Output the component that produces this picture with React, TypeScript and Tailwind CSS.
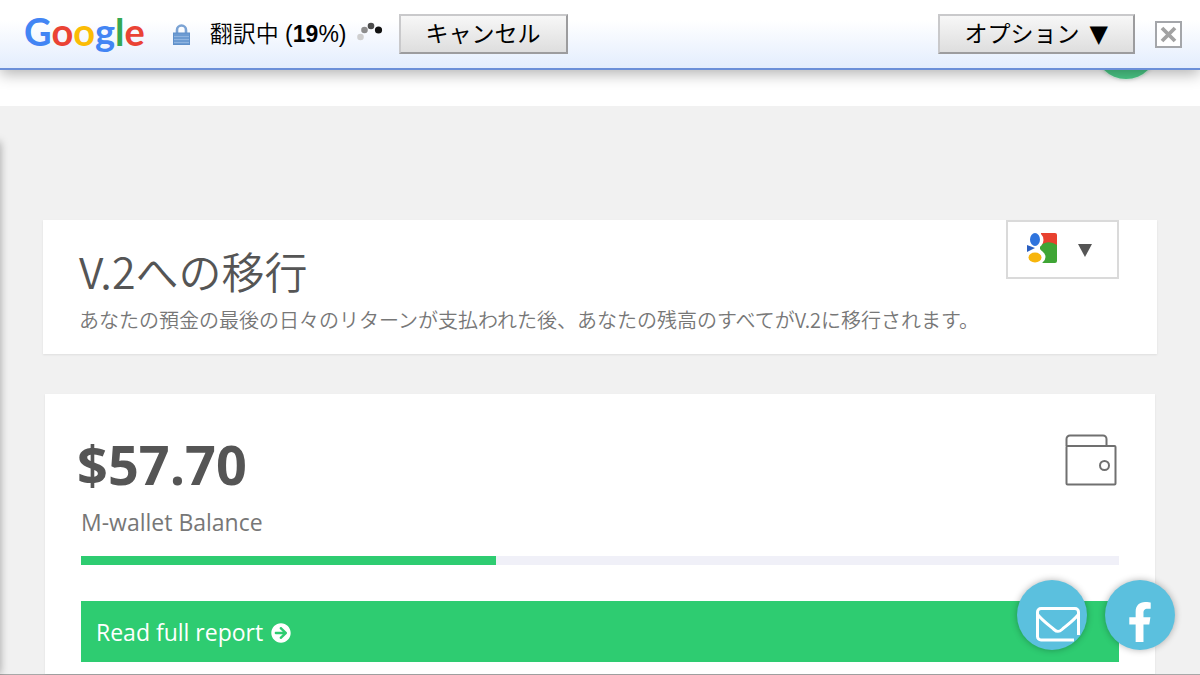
import type { ReactNode } from "react";
import { FaArrowCircleRight, FaFacebookF } from "react-icons/fa";

const uiFont =
  "font-['Liberation_Sans','Noto_Sans_CJK_JP',sans-serif]";
const pageFont = "font-['Open_Sans','Noto_Sans_CJK_JP',sans-serif]";
const japaneseFont = "font-['Noto_Sans_CJK_JP',sans-serif]";

function GoogleLogo() {
  return (
    <span
      aria-label="Google"
      className="pb-1.5 font-['Lato',sans-serif] text-[38px] leading-[48px] font-bold"
    >
      <span className="text-[#4285f4]">G</span>
      <span className="text-[#ea4335]">o</span>
      <span className="text-[#fbbc05]">o</span>
      <span className="text-[#4285f4]">g</span>
      <span className="text-[#34a853]">l</span>
      <span className="text-[#ea4335]">e</span>
    </span>
  );
}

function LockIcon() {
  return (
    <svg width="17" height="21" viewBox="0 0 17 21" aria-hidden="true">
      <path d="M4 10V6a4.5 4.5 0 0 1 9 0v4" fill="none" stroke="#7ba3d4" strokeWidth="2.6" />
      <rect x="0.5" y="9" width="16" height="11.5" fill="#6c9bd2" stroke="#5f90ca" />
      <path d="M1 12.5h15M1 15.500h15M1 18.500h15" stroke="#8fb4e0" strokeWidth="1" />
    </svg>
  );
}

function Spinner() {
  return (
    <svg width="26" height="20" viewBox="0 0 26 20" aria-hidden="true">
      <circle cx="3.500" cy="15" r="3.300" fill="#cfcfcf" />
      <circle cx="7.500" cy="8" r="3.300" fill="#8d8d8d" />
      <circle cx="14" cy="4" r="3.300" fill="#4c4c4c" />
      <circle cx="21.500" cy="8" r="3.600" fill="#111" />
    </svg>
  );
}

function ToolButton({ children }: { children: ReactNode }) {
  return (
    <button
      type="button"
      className="flex h-10 items-center border-2 border-t-[#c9c9cb] border-r-[#9c9c9e] border-b-[#9c9c9e] border-l-[#c9c9cb] bg-linear-to-b from-[#f7f7f7] to-[#dedede] px-[25px] text-[23px] leading-8 whitespace-nowrap text-black"
    >
      {children}
    </button>
  );
}

function TranslateBar() {
  return (
    <header
      className={`${uiFont} relative z-20 flex h-[70px] items-center border-b-2 border-[#6b8fd8] bg-linear-to-b from-white from-30% to-[#e3edfd] pr-[18px] pl-6 text-black shadow-[0_4px_14px_rgba(0,0,0,0.3)]`}
    >
      <GoogleLogo />
      <div className="ml-7 flex items-center">
        <LockIcon />
        <p className="ml-5 text-[23px] leading-8 font-[350] whitespace-nowrap">
          翻訳中 (<b>19</b>%)
        </p>
        <span className="ml-2.5 pb-1">
          <Spinner />
        </span>
      </div>
      <div className="ml-4">
        <ToolButton>キャンセル</ToolButton>
      </div>
      <div className="ml-auto flex items-center gap-5">
        <ToolButton>
          オプション
          <span className="ml-2.5 font-['DejaVu_Sans',sans-serif] text-[24px]">▼</span>
        </ToolButton>
        <button
          type="button"
          aria-label="閉じる"
          className="flex size-[27px] items-center justify-center border-2 border-[#a4a6aa] bg-white"
        >
          <svg width="17" height="17" viewBox="0 0 17 17" aria-hidden="true">
            <path d="M2 2l13 13M15 2L2 15" stroke="#a2a2a2" strokeWidth="3.8" />
          </svg>
        </button>
      </div>
    </header>
  );
}

function GoogleSquare() {
  return (
    <svg width="32" height="32" viewBox="0 0 32 32" aria-hidden="true">
      <path d="M15 1h14a2 2 0 0 1 2 2v12H14z" fill="#e8412f" />
      <path d="M14 14q8-7 17-1v16a2 2 0 0 1-2 2H16q5-8-2-14z" fill="#3fa535" />
      <circle cx="9" cy="8" r="8.500" fill="#fff" />
      <ellipse cx="10" cy="25" rx="9.500" ry="7.500" fill="#fff" />
      <ellipse cx="9" cy="7.500" rx="5" ry="6.500" fill="#2f74dd" />
      <path d="M1 13l8 3-8 4z" fill="#2a5fc0" />
      <ellipse cx="9" cy="25.500" rx="6.500" ry="5" fill="#f7b50c" />
    </svg>
  );
}

function WalletIcon() {
  return (
    <svg
      width="52"
      height="52"
      viewBox="0 0 52 52"
      fill="none"
      stroke="#707070"
      strokeWidth="2"
      className="mt-0.5 mr-0.5"
      aria-hidden="true"
    >
      <path d="M1.500 12V5a3.500 3.500 0 0 1 3.500-3.500h33a3.500 3.500 0 0 1 3.500 3.500v7" />
      <rect x="1.500" y="12" width="49" height="38.500" rx="1" />
      <circle cx="39.500" cy="31.500" r="4.500" />
    </svg>
  );
}

function MailIcon() {
  return (
    <svg width="44" height="35" viewBox="0 0 44 35" fill="none" stroke="#fff" strokeWidth="3" aria-hidden="true">
      <path d="M38 33H5a3.500 3.500 0 0 1-3.500-3.500V5A3.500 3.500 0 0 1 5 1.500h34A3.500 3.500 0 0 1 42.500 5v23" />
      <path d="M2 8c5 6 12 11 16 14.500 3 2.700 5 2.700 8 0 4-3.500 11-8.500 16-14.500" />
    </svg>
  );
}

export default function App() {
  return (
    <div className={`${pageFont} relative flex min-h-screen flex-col border-b border-[#a8a8a8] bg-[#f1f1f1] text-[#777]`}>
      <TranslateBar />
      <div className="relative h-9 bg-white">
        <span className="absolute right-[43px] bottom-[27px] z-10 size-[62px] rounded-full bg-[#4bc987] shadow-[0_0_4px_rgba(0,0,0,0.3)] ring-1 ring-[#d8f2e4]" />
      </div>
      <div className="absolute top-[142px] bottom-0 -left-2 w-2 shadow-[0_0_8px_rgba(0,0,0,0.35)]" />

      <main className="flex flex-1 flex-col gap-10 px-11 pt-[114px]">
        <section className="-mx-px flex h-[134px] items-start justify-between bg-white pr-[38px] pl-9 shadow-[0_1px_2px_rgba(0,0,0,0.08)]">
          <div className={`${japaneseFont} pt-5`}>
            <h1 className="text-[43px] leading-[60px] font-[350] text-[#555]">V.2への移行</h1>
            <p className="text-[20px] leading-10 font-[350] whitespace-nowrap">
              あなたの預金の最後の日々のリターンが支払われた後、あなたの残高のすべてがV.2に移行されます。
            </p>
          </div>
          <button
            type="button"
            aria-label="言語を選択"
            className="flex h-[59px] w-[113px] shrink-0 items-start gap-5 border-2 border-[#dadada] bg-white pt-[10px] pl-[18px]"
          >
            <GoogleSquare />
            <svg width="14" height="13" viewBox="0 0 14 13" className="mt-3" aria-hidden="true">
              <path d="M0 0h14L7 13z" fill="#555" />
            </svg>
          </button>
        </section>

        <section className="mx-px flex-1 bg-white px-9 pt-[38px] pb-3 shadow-[0_1px_2px_rgba(0,0,0,0.08)]">
          <div className="flex items-start justify-between">
            <div>
              <p className="-ml-1 text-[54px] leading-[64px] font-bold text-[#555]">$57.70</p>
              <p className="text-[23px] leading-[52px]">M-wallet Balance</p>
            </div>
            <WalletIcon />
          </div>
          <div
            role="progressbar"
            aria-label="M-wallet Balance"
            aria-valuenow={40}
            className="mt-2 h-[9px] bg-[#f0f0f8]"
          >
            <div className="h-full w-2/5 bg-[#2ecc71]" />
          </div>
          <a
            href="#report"
            className="mt-9 flex h-[61px] items-center gap-2 bg-[#2ecc71] px-[15px] pt-0.5 text-[23px] text-white"
          >
            Read full report
            <FaArrowCircleRight className="size-5" aria-hidden="true" />
          </a>
        </section>
      </main>

      <div className="fixed right-[25px] bottom-[25px] z-10 flex gap-[18px]">
        <a
          href="#mail"
          aria-label="Mail"
          className="flex size-[70px] items-end justify-end overflow-hidden rounded-full bg-[#5bc0de] pr-[7px] pb-2 shadow-[0_0_7px_rgba(0,0,0,0.3)]"
        >
          <MailIcon />
        </a>
        <a
          href="#facebook"
          aria-label="Facebook"
          className="flex size-[70px] items-end justify-center rounded-full bg-[#5bc0de] pb-2 shadow-[0_0_7px_rgba(0,0,0,0.3)]"
        >
          <FaFacebookF className="size-10 text-white" aria-hidden="true" />
        </a>
      </div>
    </div>
  );
}
